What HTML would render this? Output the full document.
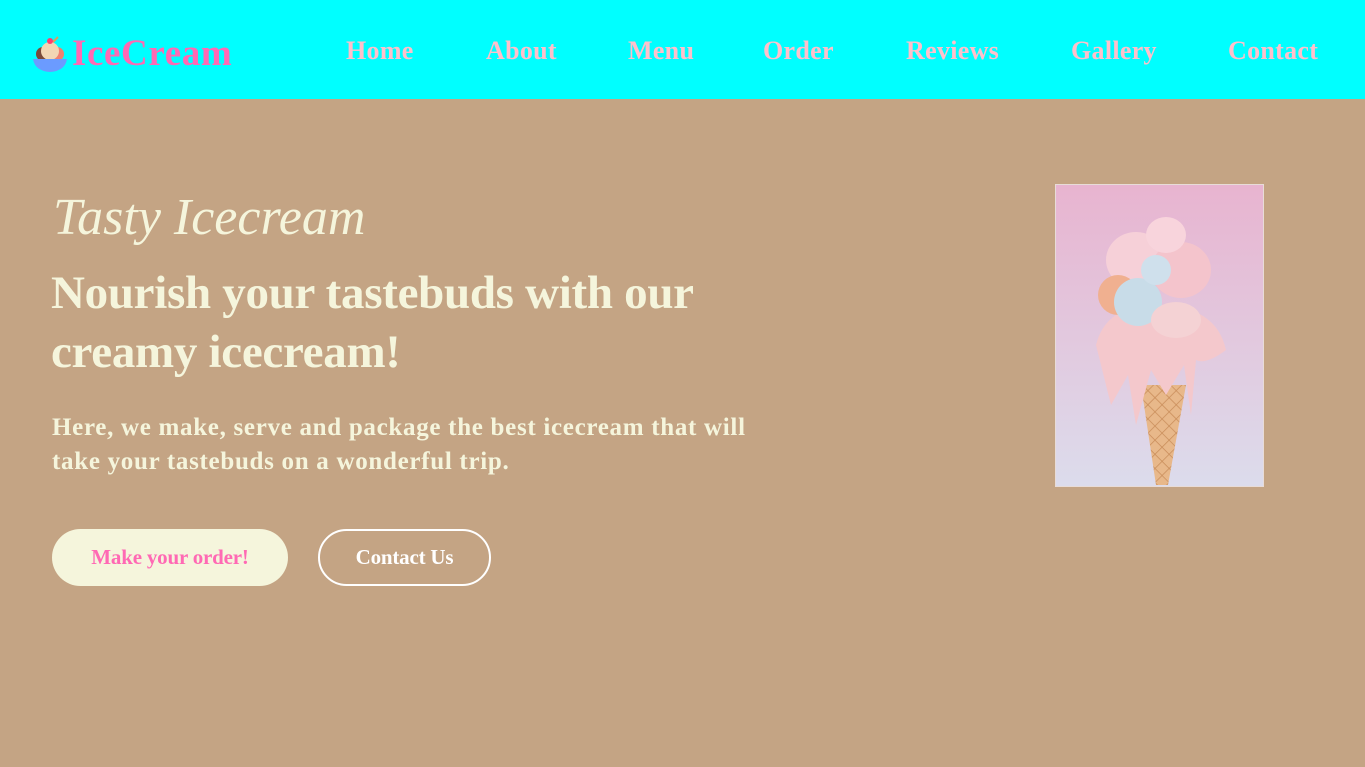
<!DOCTYPE html>
<html><head><meta charset="utf-8"><style>
*{margin:0;padding:0;box-sizing:border-box}
body{width:1365px;height:767px;background:#c4a484;font-family:"Liberation Serif",serif;overflow:hidden;position:relative}
header{position:absolute;left:0;top:0;width:1365px;height:99px;background:#00ffff}
.logo{position:absolute;left:32px;top:32px;display:flex;align-items:center}
.logo span{font-weight:bold;font-size:37px;color:#ff69b4;letter-spacing:0.6px;margin-left:4px}
nav a{position:absolute;top:36px;font-weight:bold;font-size:26px;color:#ffc0cb;text-decoration:none;letter-spacing:0.3px}
.script{position:absolute;left:53px;top:188px;font-size:52px;font-style:italic;color:#f5f5dc;letter-spacing:0px}
h1{position:absolute;left:51px;top:264px;font-size:47px;line-height:59px;color:#f5f5dc;letter-spacing:-0.3px;width:700px}
p{position:absolute;left:52px;top:411px;font-size:25px;font-weight:bold;line-height:34px;color:#f5f5dc;width:720px;letter-spacing:0.7px}
.b1{position:absolute;left:52px;top:529px;width:236px;height:57px;border-radius:29px;background:#f5f5dc;color:#ff69b4;font-weight:bold;font-size:21px;text-align:center;line-height:57px;letter-spacing:-0.2px}
.b2{position:absolute;left:318px;top:529px;width:173px;height:57px;border-radius:29px;border:2px solid #fff;color:#fff;font-weight:bold;font-size:21px;text-align:center;line-height:53px;letter-spacing:-0.2px}
.img{position:absolute;left:1055px;top:184px;width:209px;height:303px;border:1px solid #e8dcd8}
</style></head><body>
<header>
<div class="logo"><svg width="36" height="38" viewBox="0 0 36 38">
<path d="M18 10 L26 2" stroke="#d9a060" stroke-width="2"/>
<circle cx="11" cy="19" r="7" fill="#7a4a3a"/><circle cx="25" cy="19" r="7" fill="#f08070"/>
<circle cx="18" cy="16" r="9" fill="#f3d6b4"/><circle cx="18" cy="6" r="3" fill="#ff4070"/>
<path d="M1 24 H35 Q33 36 18 37 Q3 36 1 24Z" fill="#6b9bff"/></svg><span>IceCream</span></div>
<nav><a style="left:346px">Home</a><a style="left:486px">About</a><a style="left:628px">Menu</a><a style="left:763px">Order</a><a style="left:906px">Reviews</a><a style="left:1071px">Gallery</a><a style="left:1228px">Contact</a></nav>
</header>
<div class="script">Tasty Icecream</div>
<h1>Nourish your tastebuds with our creamy icecream!</h1>
<p>Here, we make, serve and package the best icecream that will take your tastebuds on a wonderful trip.</p>
<div class="b1">Make your order!</div>
<div class="b2">Contact Us</div>
<div class="img"><svg width="207" height="301" viewBox="0 0 207 301">
<defs><linearGradient id="g" x1="0" y1="0" x2="0" y2="1"><stop offset="0" stop-color="#e8b4d0"/><stop offset="1" stop-color="#dcdcec"/></linearGradient>
<pattern id="w" width="10" height="10" patternUnits="userSpaceOnUse" patternTransform="rotate(45)"><rect width="10" height="10" fill="#e8b88a"/><path d="M0 0H10M0 0V10" stroke="#c98d5a" stroke-width="1.5"/></pattern></defs>
<rect width="207" height="301" fill="url(#g)"/>
<path d="M85 200 L130 200 L112 300 L100 300Z" fill="url(#w)"/>
<ellipse cx="80" cy="75" rx="30" ry="28" fill="#f6d0d8"/>
<ellipse cx="125" cy="85" rx="30" ry="28" fill="#f4c4cc"/>
<ellipse cx="110" cy="50" rx="20" ry="18" fill="#f8d4dc"/>
<path d="M40 160 Q50 120 100 120 Q160 120 170 165 Q150 180 140 175 L135 230 L128 180 L110 210 L95 185 L80 240 L72 190 L55 220 Z" fill="#f4c8cc"/>
<circle cx="62" cy="110" r="20" fill="#f0b090"/>
<circle cx="82" cy="117" r="24" fill="#c8dce8"/>
<circle cx="100" cy="85" r="15" fill="#cfe0ec"/>
<ellipse cx="120" cy="135" rx="25" ry="18" fill="#f4d2d4"/>
</svg></div>
</body></html>
